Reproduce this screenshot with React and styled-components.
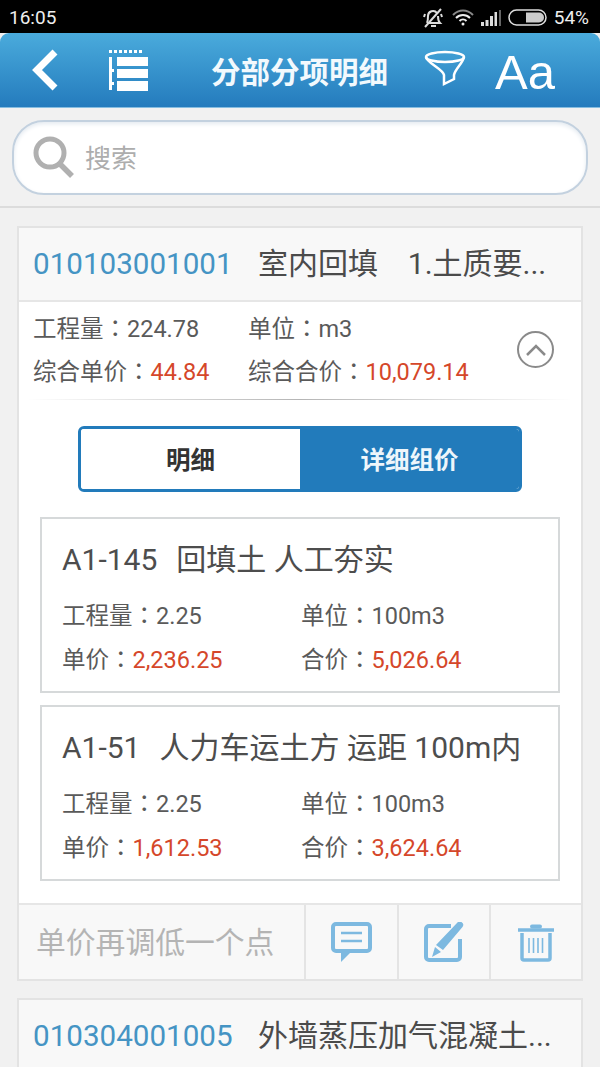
import React from "react";
import styled, { createGlobalStyle } from "styled-components";

const FONT = `Roboto, "Noto Sans CJK SC", sans-serif`;

const GlobalStyle = createGlobalStyle`
  html, body {
    margin: 0;
    padding: 0;
    background: #f0f0f0;
  }
  * {
    box-sizing: border-box;
  }
`;

const Page = styled.div`
  width: 600px;
  height: 1067px;
  overflow: hidden;
  background: #f1f1f1;
  font-family: ${FONT};
  color: #555;
`;

const StatusBar = styled.div`
  height: 33px;
  background: #000;
  color: #eee;
  display: flex;
  align-items: center;
  justify-content: space-between;
  padding: 2px 11px 0 9px;
  font-size: 19px;
`;

const StatusIcons = styled.div`
  display: flex;
  align-items: center;
  gap: 7px;
`;

const Header = styled.div`
  height: 75px;
  border-radius: 9px 9px 0 0;
  background: linear-gradient(#4aabdc, #247bbd);
  border-bottom: 1px solid #86bde0;
  display: flex;
  align-items: center;
  padding: 0 0 0 32px;
  color: #fff;
`;

const ListSlot = styled.div`
  margin-left: 48px;
  display: flex;
`;

const Title = styled.div`
  width: 178px;
  margin-left: 63px;
  font-size: 29.500px;
  font-weight: 700;
  white-space: nowrap;
  color: #f2f9fd;
`;

const FilterSlot = styled.div`
  margin: -4px 0 0 35px;
  display: flex;
`;

const FontButton = styled.div`
  margin-left: 29px;
  font-size: 49px;
  line-height: 1;
  font-family: "Liberation Sans", sans-serif;
  padding-top: 5px;
`;

const SearchArea = styled.div`
  height: 100px;
  padding: 12px 12px 0;
  border-bottom: 2px solid #dcdcdc;
`;

const SearchBox = styled.div`
  height: 75px;
  border-radius: 32px;
  border: 2px solid #c3d1df;
  background: #fff;
  box-shadow: inset 0 2px 4px #e4eaf0;
  display: flex;
  align-items: center;
  gap: 10px;
  padding: 0 0 2px 19px;
  color: #adadad;
  font-size: 26px;
`;

const List = styled.div`
  padding: 18px 17px 0;
  display: flex;
  flex-direction: column;
  gap: 17px;
`;

const Card = styled.div`
  background: #fff;
  border: 2px solid #e3e3e3;
`;

const CardHead = styled.div`
  height: 72px;
  background: #f8f8f8;
  padding: 0 14px 7px;
  display: flex;
  align-items: center;
  font-size: 30px;
  white-space: nowrap;
  color: #4b4b4b;
`;

const Code = styled.span`
  color: #4594c4;
  font-size: 29.600px;
  width: 225px;
  padding-top: 6px;
  flex: none;
`;

const Summary = styled.div`
  border-top: 2px solid #e6e6e6;
  height: 99px;
  padding: 12px 14px 0;
  position: relative;
`;

const InfoGrid = styled.div`
  display: grid;
  grid-template-columns: ${(p) => p.$first}px 1fr;
  row-gap: ${(p) => p.$gap}px;
  font-size: 23.500px;
  line-height: 30px;
  color: #5a5a5a;
  white-space: nowrap;
`;

const Colon = styled.span`
  font-family: "Noto Sans CJK TC", sans-serif;
  line-height: 1;
`;

const Price = styled.span`
  color: #d5472a;
`;

const Collapse = styled.div`
  position: absolute;
  right: 27px;
  top: 29px;
  width: 37px;
  height: 37px;
  border-radius: 50%;
  border: 2px solid #8a8a8a;
  display: flex;
  align-items: center;
  justify-content: center;
`;

const Divider = styled.div`
  height: 1px;
  margin: 0 8px;
  background: linear-gradient(90deg, #fff, #b5b5b5 50%, #fff);
`;

const Tabs = styled.div`
  width: 444px;
  height: 66px;
  margin: 26px 0 0 59px;
  border: 3px solid #227bbb;
  border-radius: 6px;
  display: flex;
  overflow: hidden;
`;

const Tab = styled.div`
  flex: 1;
  display: flex;
  align-items: center;
  justify-content: center;
  padding-bottom: 2px;
  font-size: 24.500px;
  font-weight: 700;
  background: ${(p) => (p.$active ? "#227bbb" : "#fff")};
  color: ${(p) => (p.$active ? "#eef6fb" : "#333")};
`;

const Items = styled.div`
  padding: 25px 21px 22px;
  display: flex;
  flex-direction: column;
  gap: 12px;
`;

const Item = styled.div`
  height: 176px;
  border: 2px solid #d6d9da;
  padding: 21px 20px 0;
`;

const ItemTitle = styled.div`
  font-size: 30px;
  line-height: 40px;
  color: #4d4d4d;
  white-space: nowrap;
  margin-bottom: 21px;
`;

const ItemCode = styled.span`
  margin-right: 19px;
`;

const Footer = styled.div`
  height: 76px;
  background: #f8f8f8;
  border-top: 2px solid #e6e6e6;
  display: flex;
`;

const Remark = styled.div`
  flex: 1;
  padding: 0 0 4px 17px;
  display: flex;
  align-items: center;
  font-size: 29.800px;
  color: #b4b4b4;
  white-space: nowrap;
`;

const Action = styled.div`
  width: ${(p) => p.$width}px;
  border-left: 2px solid #e4e4e4;
  display: flex;
  align-items: center;
  justify-content: center;
`;

const items = [
  { code: "A1-145", title: "回填土 人工夯实", unit: "2,236.25", total: "5,026.64" },
  { code: "A1-51", title: "人力车运土方 运距 100m内", unit: "1,612.53", total: "3,624.64" },
];

const BellOff = () => (
  <svg width="24" height="24" viewBox="0 0 24 24" fill="none" stroke="#ddd" strokeWidth="2">
    <path d="M6 17c1-2 1-4 1-7a5 5 0 0 1 9-3M17 10c0 3 0 5 2 7H6M10 20h5M3 11l1-3M21 11l-1-3" />
    <path d="M4 21 20 3" />
  </svg>
);

const Wifi = () => (
  <svg width="22" height="20" viewBox="0 0 22 20" fill="none" stroke="#eee" strokeWidth="2">
    <path d="M1 7c6-6 14-6 20 0" stroke="#888" />
    <path d="M4 10c4-4 10-4 14 0M7.500 13c2-2 5-2 7 0" />
    <circle cx="11" cy="16" r="1.500" fill="#eee" stroke="none" />
  </svg>
);

const Signal = () => (
  <svg width="20" height="18" viewBox="0 0 20 18" fill="#ddd">
    <rect x="0" y="13" width="3" height="4" />
    <rect x="4.500" y="11" width="3" height="6" />
    <rect x="9" y="7" width="3" height="10" />
    <rect x="13.500" y="3" width="2.500" height="14" />
    <rect x="18" y="1" width="2" height="16" fill="#666" />
  </svg>
);

const Battery = () => (
  <svg width="39" height="18" viewBox="0 0 39 18" fill="none">
    <rect x="1" y="1" width="37" height="15" rx="7.500" stroke="#ddd" strokeWidth="1.500" />
    <path d="M18 3.500h13a5 5 0 0 1 0 10H18z" fill="#ccc" />
  </svg>
);

const Back = () => (
  <svg width="28" height="42" viewBox="0 0 28 42" fill="none" stroke="#fff" strokeWidth="7">
    <path d="M23 3 5 21l18 18" />
  </svg>
);

const ListIcon = () => (
  <svg width="40" height="42" viewBox="0 0 40 42" fill="#fff">
    <path d="M1 1h3v3H1zM6 1h3v3H6zM11 1h3v3h-3zM16 1h3v3h-3zM21 1h3v3h-3zM26 1h3v3h-3zM31 1h3v3h-3z" />
    <rect x="9" y="8" width="31" height="9" />
    <rect x="9" y="20" width="31" height="9" />
    <rect x="9" y="32" width="31" height="10" />
    <path d="M1 8h3v12h2v3H4v10h2v3H4v5H1z" />
  </svg>
);

const Filter = () => (
  <svg width="42" height="36" viewBox="0 0 42 36" fill="none" stroke="#fff" strokeWidth="2.500">
    <ellipse cx="21" cy="7" rx="19" ry="5" />
    <path d="M2 7c1 6 17 12 18 18v9l10-5v-4c1-6 9-12 10-18" />
  </svg>
);

const Search = () => (
  <svg width="42" height="42" viewBox="0 0 42 42" fill="none" stroke="#b0b0b0">
    <circle cx="17" cy="17" r="14" strokeWidth="5" />
    <path d="M27 28l12 12" strokeWidth="5.500" />
  </svg>
);

const Chevron = () => (
  <svg width="22" height="14" viewBox="0 0 22 14" fill="none" stroke="#8a8a8a" strokeWidth="2.500">
    <path d="M2 12 11 3l9 9" />
  </svg>
);

const Comment = () => (
  <svg width="41" height="40" viewBox="0 0 41 40" fill="none" stroke="#7db9e0" strokeWidth="4">
    <rect x="2" y="2" width="37" height="27" rx="3" />
    <path d="M10 11h21M10 19h21" strokeWidth="2.500" />
    <path d="M10 29h11L10 40z" fill="#7db9e0" stroke="none" />
  </svg>
);

const Edit = () => (
  <svg width="40" height="40" viewBox="0 0 40 40" fill="none" stroke="#7db9e0" strokeWidth="4">
    <path d="M27 4H5a3 3 0 0 0-3 3v28a3 3 0 0 0 3 3h28a3 3 0 0 0 3-3V17" />
    <path d="M33 1a3 3 0 0 1 5.500 4L19 28l-7-5zM11 25l6 5-9 5z" fill="#7db9e0" stroke="none" />
  </svg>
);

const Trash = () => (
  <svg width="36" height="40" viewBox="0 0 36 40" fill="none" stroke="#7db9e0" strokeWidth="3.500">
    <path d="M0 8h36" />
    <path d="M14 4.500h8" strokeWidth="4" strokeLinecap="round" />
    <path d="M4 11v25a2 2 0 0 0 2 2h24a2 2 0 0 0 2-2V11" />
    <path d="M11 16v15M15.500 16v15M20 16v15M24.500 16v15" strokeWidth="1.600" />
  </svg>
);

export default function App() {
  return (
    <Page>
      <GlobalStyle />
      <StatusBar>
        <span>16:05</span>
        <StatusIcons>
          <BellOff />
          <Wifi />
          <Signal />
          <Battery />
          <span>54%</span>
        </StatusIcons>
      </StatusBar>
      <Header>
        <Back />
        <ListSlot>
          <ListIcon />
        </ListSlot>
        <Title>分部分项明细</Title>
        <FilterSlot>
          <Filter />
        </FilterSlot>
        <FontButton>Aa</FontButton>
      </Header>
      <SearchArea>
        <SearchBox>
          <Search />
          搜索
        </SearchBox>
      </SearchArea>
      <List>
        <Card>
          <CardHead>
            <Code>010103001001</Code>
            室内回填&nbsp;&nbsp;&nbsp;&nbsp;1.土质要...
          </CardHead>
          <Summary>
            <InfoGrid $first={215} $gap={13}>
              <span>
                工程量<Colon>：</Colon>224.78
              </span>
              <span>
                单位<Colon>：</Colon>m3
              </span>
              <span>
                综合单价<Colon>：</Colon>
                <Price>44.84</Price>
              </span>
              <span>
                综合合价<Colon>：</Colon>
                <Price>10,079.14</Price>
              </span>
            </InfoGrid>
            <Collapse>
              <Chevron />
            </Collapse>
          </Summary>
          <Divider />
          <Tabs>
            <Tab>明细</Tab>
            <Tab $active>详细组价</Tab>
          </Tabs>
          <Items>
            {items.map((item) => (
              <Item key={item.code}>
                <ItemTitle>
                  <ItemCode>{item.code}</ItemCode>
                  {item.title}
                </ItemTitle>
                <InfoGrid $first={239} $gap={14}>
                  <span>
                    工程量<Colon>：</Colon>2.25
                  </span>
                  <span>
                    单位<Colon>：</Colon>100m3
                  </span>
                  <span>
                    单价<Colon>：</Colon>
                    <Price>{item.unit}</Price>
                  </span>
                  <span>
                    合价<Colon>：</Colon>
                    <Price>{item.total}</Price>
                  </span>
                </InfoGrid>
              </Item>
            ))}
          </Items>
          <Footer>
            <Remark>单价再调低一个点</Remark>
            <Action $width={93}>
              <Comment />
            </Action>
            <Action $width={92}>
              <Edit />
            </Action>
            <Action $width={92}>
              <Trash />
            </Action>
          </Footer>
        </Card>
        <Card>
          <CardHead>
            <Code>010304001005</Code>
            外墙蒸压加气混凝土...
          </CardHead>
        </Card>
      </List>
    </Page>
  );
}
